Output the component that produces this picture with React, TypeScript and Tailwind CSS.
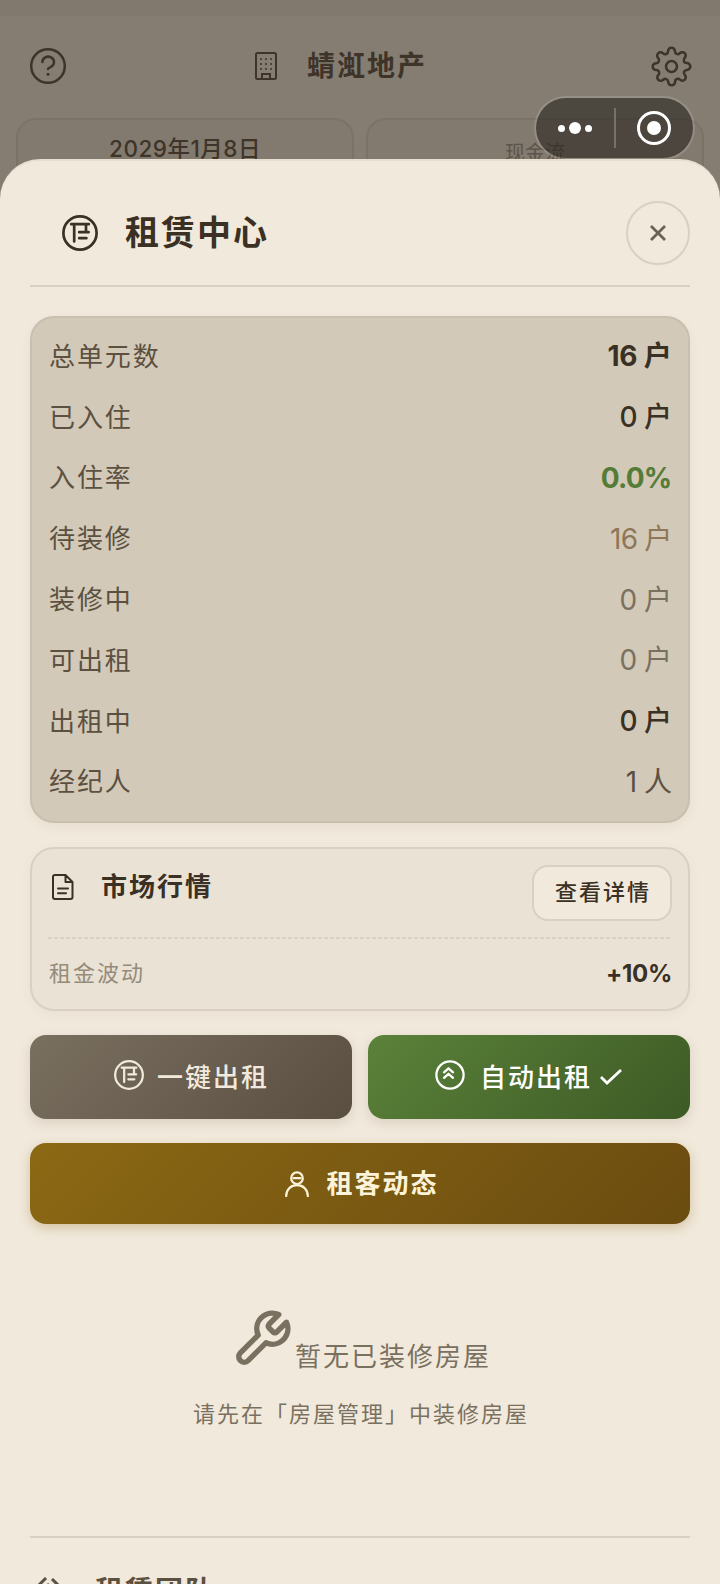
import type { ReactNode } from "react";

interface Stat {
  label: string;
  value: string;
  className: string;
}

const stats: Stat[] = [
  { label: "总单元数", value: "16 户", className: "font-bold tracking-[-0.2px] text-[#3a3024]" },
  { label: "已入住", value: "0 户", className: "font-medium tracking-[-0.5px] text-[#3a3024]" },
  { label: "入住率", value: "0.0%", className: "font-bold tracking-[-0.8px] text-[#557c37]" },
  { label: "待装修", value: "16 户", className: "tracking-[-0.8px] text-[#8f7657]" },
  { label: "装修中", value: "0 户", className: "tracking-[-0.5px] text-[#7a7060]" },
  { label: "可出租", value: "0 户", className: "tracking-[-0.5px] text-[#7a7060]" },
  { label: "出租中", value: "0 户", className: "font-medium tracking-[-0.5px] text-[#3a3024]" },
  { label: "经纪人", value: "1 人", className: "tracking-[-0.5px] text-[#5c5040]" },
];

function LeaseIcon({ className }: { className: string }) {
  return (
    <svg className={className} viewBox="0 0 36 36" fill="none" stroke="currentColor" strokeWidth="2.7" strokeLinecap="round" strokeLinejoin="round">
      <circle cx="18" cy="18" r="16.6" />
      <path d="M9.2 9.2h17.6M12.2 9.2v17.2M17.2 17.2h9.4M17.2 23.2h7.2M24 9.2v8" />
    </svg>
  );
}

function HelpIcon() {
  return (
    <svg className="h-9 w-9" viewBox="0 0 36 36" fill="none" stroke="currentColor" strokeWidth="2.5" strokeLinecap="round">
      <circle cx="18" cy="18" r="16.8" />
      <path d="M12.4 14a5.8 5.400 0 1 1 8.800 4.700c-2 1.200-3.200 1.300-3.200 2.300" />
      <circle cx="18" cy="26.2" r="1.5" fill="currentColor" stroke="none" />
    </svg>
  );
}

function BuildingIcon() {
  return (
    <svg className="h-7 w-[22px]" viewBox="0 0 22 28" fill="none" stroke="currentColor">
      <rect x="1" y="1" width="20" height="26" rx="1.5" strokeWidth="2" />
      <path d="M7 27v-5h8v5" strokeWidth="2" />
      <path d="M5 7h2m3 0h2m3 0h2M5 12h2m3 0h2m3 0h2M5 17h2m3 0h2m3 0h2" strokeWidth="1.6" />
    </svg>
  );
}

function GearIcon() {
  return (
    <svg className="h-[41px] w-[41px]" viewBox="0 0 24 24" fill="none" stroke="currentColor" strokeWidth="1.5" strokeLinecap="round" strokeLinejoin="round">
      <circle cx="12" cy="12" r="3.2" />
      <path d="M19.4 15a1.65 1.65 0 0 0 .33 1.82l.06.06a2 2 0 0 1 0 2.83 2 2 0 0 1-2.83 0l-.06-.06a1.65 1.65 0 0 0-1.82-.33 1.65 1.65 0 0 0-1 1.51V21a2 2 0 0 1-2 2 2 2 0 0 1-2-2v-.09A1.65 1.65 0 0 0 9 19.4a1.65 1.65 0 0 0-1.82.33l-.06.06a2 2 0 0 1-2.83 0 2 2 0 0 1 0-2.83l.06-.06a1.65 1.65 0 0 0 .33-1.82 1.65 1.65 0 0 0-1.51-1H3a2 2 0 0 1-2-2 2 2 0 0 1 2-2h.09A1.65 1.65 0 0 0 4.6 9a1.65 1.65 0 0 0-.33-1.82l-.06-.06a2 2 0 0 1 0-2.83 2 2 0 0 1 2.83 0l.06.06a1.65 1.65 0 0 0 1.82.33H9a1.65 1.65 0 0 0 1-1.51V3a2 2 0 0 1 2-2 2 2 0 0 1 2 2v.09a1.65 1.65 0 0 0 1 1.51 1.65 1.65 0 0 0 1.82-.33l.06-.06a2 2 0 0 1 2.83 0 2 2 0 0 1 0 2.83l-.06.06a1.65 1.65 0 0 0-.33 1.82V9a1.65 1.65 0 0 0 1.51 1H21a2 2 0 0 1 2 2 2 2 0 0 1-2 2h-.09a1.65 1.65 0 0 0-1.51 1z" />
    </svg>
  );
}

function WrenchIcon() {
  return (
    <svg className="mr-0.5 mb-[3px] h-[62px] w-[62px]" viewBox="0 0 24 24" fill="none" stroke="currentColor" strokeWidth="2.1" strokeLinecap="round" strokeLinejoin="round">
      <path d="M14.7 6.3a1 1 0 0 0 0 1.4l1.6 1.6a1 1 0 0 0 1.4 0l3.77-3.77a6 6 0 0 1-7.94 7.94l-6.91 6.91a2.12 2.12 0 0 1-3-3l6.91-6.91a6 6 0 0 1 7.94-7.94l-3.76 3.76z" />
    </svg>
  );
}

function DocIcon() {
  return (
    <svg className="h-[26px] w-[22px]" viewBox="0 0 22 26" fill="none" stroke="currentColor" strokeWidth="2" strokeLinecap="round" strokeLinejoin="round">
      <path d="M13.5 1H3a2 2 0 0 0-2 2v20a2 2 0 0 0 2 2h15.5a2 2 0 0 0 2-2V8l-7-7v7h7M6 14.5h10M6 19.3h8" />
    </svg>
  );
}

function TenantIcon() {
  return (
    <svg className="h-[26px] w-6" viewBox="0 0 24 26" fill="none" stroke="currentColor" strokeWidth="2.2" strokeLinecap="round">
      <circle cx="12" cy="7.2" r="5.8" />
      <path d="M8.5 7.2h7M1.2 25c0-6.500 4.500-10.800 10.800-10.800s10.800 4.300 10.800 10.800" />
    </svg>
  );
}

function AutoIcon() {
  return (
    <svg className="mb-1 h-[30px] w-[30px]" viewBox="0 0 30 30" fill="none" stroke="currentColor" strokeWidth="2.3" strokeLinecap="round" strokeLinejoin="round">
      <circle cx="15" cy="15" r="13.6" />
      <path d="m9 12.3 4.500-4 4.500 4M9 17.800l4.500-4 4.500 4" />
    </svg>
  );
}

function ActionButton({ className, children }: { className: string; children: ReactNode }) {
  return (
    <button className={`flex items-center justify-center rounded-2xl text-[26px] tracking-[2px] ${className}`}>
      {children}
    </button>
  );
}

function TopBar() {
  return (
    <header className="h-[230px] bg-[#857d71] text-[#3e3429]">
      <div className="h-4 bg-[#81796e]" />
      <div className="flex h-[102px] items-center justify-between pr-7 pb-0.5 pl-[30px]">
        <HelpIcon />
        <div className="flex items-center pr-[35px]">
          <BuildingIcon />
          <h1 className="ml-[30px] text-[28px] leading-9 font-bold tracking-[2px]">蜻渱地产</h1>
        </div>
        <GearIcon />
      </div>
      <div className="flex gap-3 px-4">
        <div className="h-28 flex-1 rounded-[20px] border-2 border-[#7b7366] bg-[#827a6e] pt-[13px] text-center text-[22.5px] leading-8 font-medium tracking-[0.5px]">
          2029年1月8日
        </div>
        <div className="h-28 flex-1 rounded-[20px] border-2 border-[#7b7366] bg-[#827a6e] pt-[17px] text-center text-[20px] leading-8 text-[#5d5449]">
          现金流
        </div>
      </div>
    </header>
  );
}

function Capsule() {
  return (
    <div className="absolute top-24 right-[25px] flex h-16 w-[161px] items-center rounded-full border-2 border-white/15 bg-[#241f1b]/57 bg-clip-padding">
      <div className="flex flex-1 items-center justify-center gap-1">
        <i className="h-[7px] w-[7px] rounded-full bg-white" />
        <i className="h-3 w-3 rounded-full bg-white" />
        <i className="h-[7px] w-[7px] rounded-full bg-white" />
      </div>
      <div className="h-10 w-0.5 bg-[#77716a]" />
      <div className="flex flex-1 items-center justify-center">
        <div className="flex h-[34px] w-[34px] items-center justify-center rounded-full border-[3px] border-white">
          <i className="h-[14px] w-[14px] rounded-full bg-white" />
        </div>
      </div>
    </div>
  );
}

export default function App() {
  return (
    <div className="relative h-[1584px] w-[720px] overflow-hidden bg-[#857d71] font-['Inter','Noto_Sans_CJK_SC',sans-serif]">
      <TopBar />
      <Capsule />

      <main className="relative -mt-[71px] h-[1425px] rounded-t-[40px] border-t-2 border-[#e6decf] bg-[#f1e9dc] px-[30px] pt-10 text-[#3a3024]">
        {/* sheet title */}
        <div className="flex h-[86px] items-start justify-between border-b-2 border-[#d8d0c2] pl-8">
          <div className="flex h-[63px] items-center">
            <LeaseIcon className="h-9 w-9" />
            <h2 className="ml-[27px] text-[34px] leading-none font-bold tracking-[2px]">租赁中心</h2>
          </div>
          <button className="flex h-16 w-16 items-center justify-center rounded-full border-2 border-[#d8d0c2] text-[#6b6151]">
            <svg className="h-4 w-4" viewBox="0 0 16 16" stroke="currentColor" strokeWidth="2.8">
              <path d="m1 1 14 14M15 1 1 15" />
            </svg>
          </button>
        </div>

        {/* unit counts */}
        <section className="mt-[29px] flex h-[507px] flex-col rounded-3xl border-2 border-[#c8bfae] bg-[#d2c9b8] pt-2 pr-[16.5px] pl-[17px] shadow-[0_4px_12px_rgba(90,70,40,0.06)]">
          {stats.map((s) => (
            <div key={s.label} className="flex h-[60.8px] items-center justify-between text-[26px]">
              <span className="tracking-[1.9px] text-[#5c5040]">{s.label}</span>
              <span className={`text-[28px] ${s.className}`}>{s.value}</span>
            </div>
          ))}
        </section>

        {/* market */}
        <section className="mt-6 h-[164px] rounded-3xl border-2 border-[#d8d0c2] bg-[#eae2d5] px-4 pt-4 shadow-[0_4px_12px_rgba(90,70,40,0.05)]">
          <div className="flex h-[72px] items-start justify-between">
            <div className="flex h-[43px] items-center pl-1">
              <DocIcon />
              <h3 className="ml-[27px] text-[26px] font-bold tracking-[2px]">市场行情</h3>
            </div>
            <button className="h-14 w-[140px] rounded-2xl border-2 border-[#d8d0c2] bg-[#f1e9dc] pb-0.5 pl-0.5 text-[22px] font-medium tracking-[2px]">
              查看详情
            </button>
          </div>
          <div className="h-0.5 bg-[repeating-linear-gradient(90deg,#d8d0c2_0_4px,transparent_4px_6px)]" />
          <div className="flex h-[69px] items-center justify-between pl-px">
            <span className="text-[22px] tracking-[2px] text-[#958b7a]">租金波动</span>
            <span className="text-[24px] font-bold tracking-[-0.3px]">+10%</span>
          </div>
        </section>

        {/* actions */}
        <div className="mt-6 grid grid-cols-2 gap-4">
          <ActionButton className="h-[84px] bg-linear-135 from-[#7a7060] to-[#5a4e40] font-medium text-[#f1e9dc] shadow-[0_4px_12px_rgba(90,70,40,0.15)]">
            <LeaseIcon className="mr-[13px] mb-1 h-[30px] w-[30px]" />
            <span className="-mr-px">一键出租</span>
          </ActionButton>
          <ActionButton className="h-[84px] bg-linear-135 from-[#5b823a] to-[#3d5a25] font-medium text-white shadow-[0_4px_12px_rgba(90,70,40,0.15)]">
            <AutoIcon />
            <span className="ml-[15px]">自动出租</span>
            <svg className="ml-[7px] h-[18px] w-6" viewBox="0 0 24 18" fill="none" stroke="currentColor" strokeWidth="2.8">
              <path d="m2 9 6 6L22 2" />
            </svg>
          </ActionButton>
        </div>
        <ActionButton className="mt-6 h-[81px] w-full bg-linear-135 from-[#8b6914] to-[#6b4c10] pl-0.5 font-bold text-[#fdf3d8] shadow-[0_4px_12px_rgba(139,105,20,0.3)]">
          <TenantIcon />
          <span className="-mr-0.5 ml-[17px]">租客动态</span>
        </ActionButton>

        {/* empty state */}
        <div className="flex h-[312px] flex-col items-center pt-[84px] text-[#7a7060]">
          <div className="flex items-end pl-0.5">
            <WrenchIcon />
            <span className="text-[26px] leading-8 tracking-[2px]">暂无已装修房屋</span>
          </div>
          <p className="mt-[25px] pl-0.5 text-[22px] leading-8 tracking-[2px]">请先在「房屋管理」中装修房屋</p>
        </div>

        {/* team */}
        <div className="flex items-start border-t-2 border-[#d8d0c2] pt-[35px] text-[#5c5040]">
          <svg className="mt-1 ml-[7px] h-7 w-7" viewBox="0 0 28 28" fill="none" stroke="currentColor" strokeWidth="3">
            <path d="M9 1 1 9h5v12M15 2l7 7M10 7l3 3" />
          </svg>
          <h3 className="ml-[30px] text-[28px] leading-9 font-bold tracking-[2px]">租赁团队</h3>
        </div>
      </main>
    </div>
  );
}
